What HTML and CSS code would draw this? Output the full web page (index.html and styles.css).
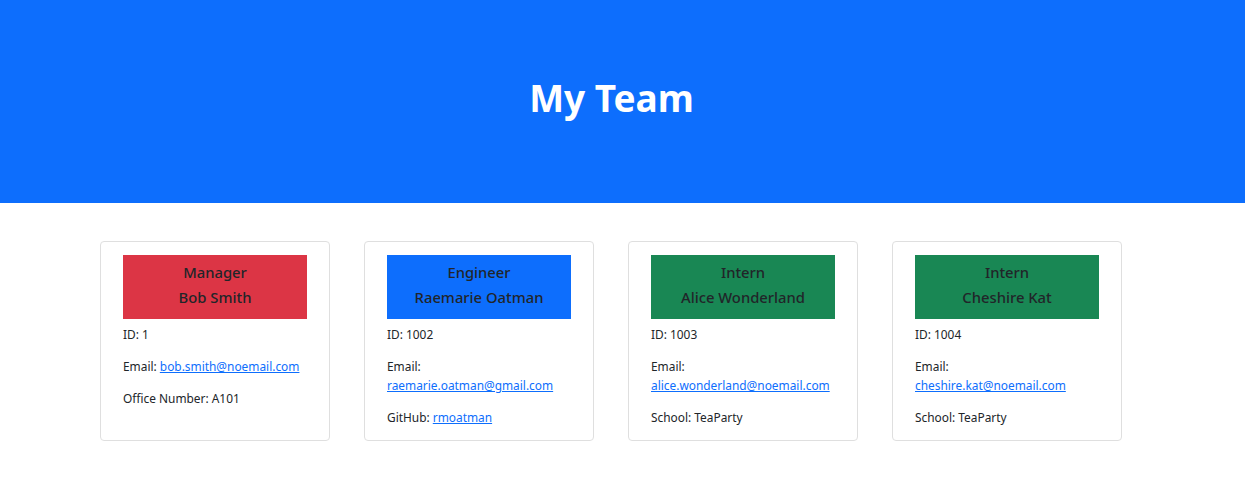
FILE: index.html
```html
<!DOCTYPE html>
<html lang="en">
<head>
<meta charset="utf-8">
<title>My Team</title>
<link rel="stylesheet" href="styles.css">
</head>
<body>
<header class="hero">
  <h1 class="hero-title">My Team</h1>
</header>
<main class="team">
  <div class="card">
    <div class="card-head head-red">Manager<br>Bob Smith</div>
    <p class="card-text">ID: 1</p>
    <p class="card-text">Email: <a href="#">bob.smith@noemail.com</a></p>
    <p class="card-text">Office Number: A101</p>
  </div>
  <div class="card">
    <div class="card-head head-blue">Engineer<br>Raemarie Oatman</div>
    <p class="card-text">ID: 1002</p>
    <p class="card-text">Email:<br><a href="#">raemarie.oatman@gmail.com</a></p>
    <p class="card-text">GitHub: <a href="#">rmoatman</a></p>
  </div>
  <div class="card">
    <div class="card-head head-green">Intern<br>Alice Wonderland</div>
    <p class="card-text">ID: 1003</p>
    <p class="card-text">Email:<br><a href="#">alice.wonderland@noemail.com</a></p>
    <p class="card-text">School: TeaParty</p>
  </div>
  <div class="card">
    <div class="card-head head-green">Intern<br>Cheshire Kat</div>
    <p class="card-text">ID: 1004</p>
    <p class="card-text">Email:<br><a href="#">cheshire.kat@noemail.com</a></p>
    <p class="card-text">School: TeaParty</p>
  </div>
</main>
</body>
</html>
```
FILE: styles.css
```css
* { box-sizing: border-box; }
html, body { margin: 0; padding: 0; }
body {
  font-family: "Noto Sans", "Open Sans", "Liberation Sans", sans-serif;
  color: #212529;
  background: #fff;
  font-size: 11.9px;
  line-height: 1.5;
}
.hero {
  background: #0d6efd;
  height: 203px;
  display: flex;
  align-items: center;
  justify-content: center;
  padding-bottom: 6px;
}
.hero-title {
  margin: 0;
  color: #fff;
  font-size: 37px;
  font-weight: 700;
  line-height: 1.2;
  position: relative;
  left: -11px;
}
.team {
  display: flex;
  gap: 34px;
  padding: 38px 0 0 100px;
  align-items: stretch;
}
.card {
  width: 230px;
  border: 1px solid #dfdfdf;
  border-radius: 4px;
  padding: 13px 22px 0;
}
.card-head {
  height: 64px;
  padding-top: 5px;
  text-align: center;
  font-size: 14.8px;
  font-weight: 500;
  line-height: 25px;
  margin-bottom: 6px;
}
.head-red { background: #dc3545; }
.head-blue { background: #0d6efd; }
.head-green { background: #198754; }
.card-text {
  margin: 0 0 12.8px;
  line-height: 19.2px;
}
.card-text a { color: #0d6efd; text-decoration: underline; }
```
